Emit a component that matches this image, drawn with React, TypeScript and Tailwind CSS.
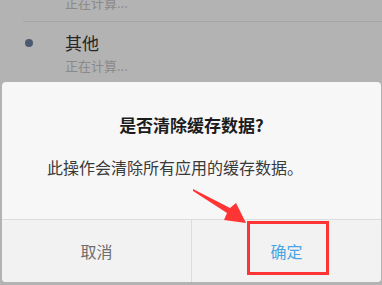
import type { ReactNode } from 'react'

const FONT = '"Noto Sans CJK SC", "Noto Sans", sans-serif'

function ListItem({ title, sub }: { title: string; sub: string }) {
  return (
    <div className="flex h-[60px] flex-col">
      <div className="flex h-[16px] items-center mt-[13px]">
        <span className="ml-[25px] h-[8px] w-[8px] rounded-full bg-[#4b5a6e]" />
        <span className="ml-[32px] text-[17px] leading-[16px] text-[#262626]">{title}</span>
      </div>
      <div className="ml-[65px] mt-[8px] text-[13px] leading-[13px] text-[#8a8a8a]">{sub}</div>
    </div>
  )
}

function DialogButton({ children, className }: { children: ReactNode; className?: string }) {
  return (
    <button className={`flex flex-1 items-center justify-center pb-[1px] text-[16px] ${className ?? ''}`}>
      {children}
    </button>
  )
}

export default function App() {
  return (
    <div
      className="relative flex h-[285px] w-[382px] flex-col overflow-hidden bg-[#b3b3b3]"
      style={{ fontFamily: FONT }}
    >
      {/* list behind the dim overlay */}
      <div className="h-[82px] shrink-0">
        <div className="-mt-[4px] ml-[65px] h-[13px] text-[13px] leading-[13px] text-[#8a8a8a]">正在计算...</div>
        <div className="ml-[23px] mt-[12px] h-px bg-[#a5a5a5]" />
        <ListItem title="其他" sub="正在计算..." />
      </div>

      {/* dialog */}
      <div className="ml-[2px] mr-[1px] flex h-[200px] flex-col overflow-hidden rounded-[4px] bg-[#f7f7f7]">
        <div className="pt-[34px] text-center text-[17px] font-bold leading-[18px] text-[#1c1c1c]">
          是否清除缓存数据?
        </div>
        <div className="mt-[25px] pl-[45px] text-[16px] leading-[16px] text-[#3a3a3a]">
          此操作会清除所有应用的缓存数据。
        </div>
        <div className="mt-auto flex h-[63px] border-t border-[#dcdcdc] bg-[#f2f2f2]">
          <DialogButton className="text-[#6e6e6e]">取消</DialogButton>
          <div className="w-px bg-[#dcdcdc]" />
          <DialogButton className="text-[#4aa6e3]">确定</DialogButton>
        </div>
      </div>

      {/* annotation */}
      <div className="absolute left-[247px] top-[221px] h-[54px] w-[82px] border-[3px] border-[#ff3535]" />
      <svg className="absolute left-0 top-0" width="382" height="285" viewBox="0 0 382 285">
        <polygon
          points="193,189 230,208 236,203 246,223 224,220 227,213 193,191"
          fill="#ff3535"
        />
      </svg>
    </div>
  )
}
